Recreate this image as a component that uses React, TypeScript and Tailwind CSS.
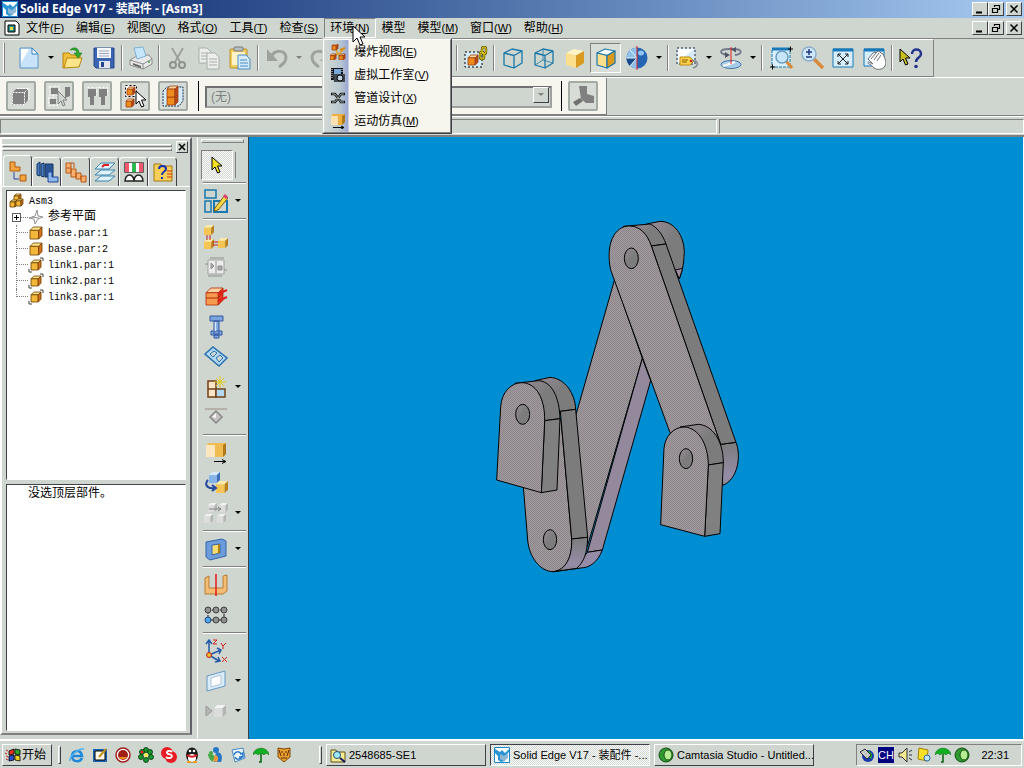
import { useState } from 'react';
import type { ReactNode } from 'react';
import { clsx } from 'clsx';

const raised = 'border border-t-white border-l-white border-r-[#404048] border-b-[#404048] bg-[#cfd6cf]';
const sunken = 'border border-t-[#404048] border-l-[#404048] border-r-white border-b-white';
const etched = 'border border-t-[#808080] border-l-[#808080] border-r-white border-b-white';
const ridge = 'border border-t-white border-l-white border-r-[#808080] border-b-[#808080]';
const dither = 'bg-[repeating-conic-gradient(#ffffff_0_25%,#cfd6cf_0_50%)] bg-size-[2px_2px]';

function Svg({ size = 24, children }: { size?: 12 | 16 | 24; children: ReactNode }) {
  return (
    <svg
      viewBox={`0 0 ${size} ${size}`}
      className={clsx('shrink-0', size === 24 && 'w-6 h-6', size === 16 && 'w-4 h-4', size === 12 && 'w-3 h-3')}
      fill="none"
      aria-hidden="true"
    >
      {children}
    </svg>
  );
}

const tones = {
  gold: ['#fdeaa8', '#f4c552', '#b8801c', 'none'],
  orange: ['#ffd9a0', '#ef8a1c', '#b8481a', '#a04010'],
  tree: ['#ffe48a', '#f3b83a', '#d8701c', '#6a4000'],
  blue: ['#d6e8fb', '#86b4ea', '#3d6eb8', 'none'],
  grey: ['#f2f2f2', '#dcdcdc', '#b4b4b4', 'none'],
  red: ['#ffd0a0', '#f79a50', '#e83818', '#b02808'],
};

function Cube({ x, y, s, tone = 'gold' }: { x: number; y: number; s: number; tone?: keyof typeof tones }) {
  const [top, front, side, line] = tones[tone];
  const d = s * 0.28;
  const w = s - d;
  return (
    <g stroke={line} strokeWidth=".8" strokeLinejoin="round">
      <path d={`M${x} ${y + d}l${d} ${-d}h${w}l${-d} ${d}z`} fill={top} />
      <path d={`M${x} ${y + d}h${w}v${w}h${-w}z`} fill={front} />
      <path d={`M${x + w} ${y + d}l${d} ${-d}v${w}l${-d} ${d}z`} fill={side} />
    </g>
  );
}

function WireCube({ inner = false, line = '#1b78a8' }: { inner?: boolean; line?: string }) {
  return (
    <Svg>
      <g stroke={line} strokeWidth="1.3" strokeLinejoin="round">
        <path d="M3 7l8-4 10 2v12l-8 5-10-3z" />
        <path d="M3 7l10 2.500 8-4.500M13 9.500V22" />
        {inner && <path d="M11 3v11l-8 5M11 14l10 3" strokeWidth=".8" />}
      </g>
    </Svg>
  );
}

function SolidCube({ edges = false }: { edges?: boolean }) {
  return (
    <Svg>
      <g stroke={edges ? '#1b78a8' : 'none'} strokeWidth="1.2" strokeLinejoin="round">
        <path d="M3 7l8-4 10 2-8 4.500z" fill={edges ? '#ffffff' : '#fdf3c4'} />
        <path d="M3 7l10 2.500V22L3 19z" fill="#fbdf8c" />
        <path d="M13 9.500L21 5v12l-8 5z" fill="#d99a20" />
      </g>
    </Svg>
  );
}

function Pointer({ fill = '#fff', x = 0, y = 0 }: { fill?: string; x?: number; y?: number }) {
  return (
    <path
      d={`M${x} ${y}v13l3-3 2.500 6 2.500-1-2.500-6h4.500z`}
      fill={fill}
      stroke="#000"
      strokeWidth="1"
    />
  );
}

const newIcon = (
  <Svg>
    <path d="M3 2h12l6 6v14H3z" fill="#c9e4fa" stroke="#5a94c8" />
    <path d="M4 3h8L4 17z" fill="#fff" />
    <path d="M15 2v6h6z" fill="#fff" stroke="#2f7fc0" />
  </Svg>
);
const openIcon = (
  <Svg>
    <path d="M2 7h6l2 2h9v4H7L3 22H2z" fill="#f0bf3c" stroke="#b8860b" />
    <path d="M3 22l3-10h15l-3 9z" fill="#fde68a" stroke="#b8860b" />
    <path d="M9 4c4-4 9-2 9 3h3l-4 5-4-5h3c0-3-4-4-7-3z" fill="#2fa82f" stroke="#187818" strokeWidth=".6" />
  </Svg>
);
const saveIcon = (
  <Svg>
    <path d="M2 2h20v20H4l-2-2z" fill="#3a63b0" stroke="#25468c" />
    <path d="M5 2h14v10H5z" fill="#f4f6fb" />
    <path d="M7 5h10M7 7.500h10M7 10h10" stroke="#9aa4b8" />
    <path d="M7 15h11v7H7z" fill="#dfe4ee" />
    <path d="M9 16h3v5H9z" fill="#25468c" />
  </Svg>
);
const printIcon = (
  <Svg>
    <path d="M1 14l7-4 12-1 3 4v5l-9 5-13-4z" fill="#e8e8e8" stroke="#8c8c8c" />
    <path d="M5 2l9-1 3 9-9 3z" fill="#c8e6fa" stroke="#6aa6d0" strokeWidth=".8" />
    <path d="M1 14l13 4 9-5M14 18v5" stroke="#8c8c8c" />
    <path d="M4 17l8 3v2l-8-3z" fill="#666" />
    <circle cx="20" cy="16" r="1" fill="#3aa83a" />
  </Svg>
);
const cutIcon = (
  <Svg>
    <path d="M6 2l8 14M17 2L9 16" stroke="#9a9f9a" strokeWidth="1.800" />
    <circle cx="7" cy="19" r="3" stroke="#8d928d" strokeWidth="2" />
    <circle cx="16" cy="19" r="3" stroke="#8d928d" strokeWidth="2" />
  </Svg>
);
const copyIcon = (
  <Svg>
    <g fill="#eceeec" stroke="#a8aea8">
      <path d="M2 2h8l4 4v11H2z" />
      <path d="M4 7h7M4 10h7M4 13h7" />
      <path d="M10 7h8l4 4v12H10z" />
      <path d="M12 13h8M12 16h8M12 19h8" />
    </g>
  </Svg>
);
const pasteIcon = (
  <Svg>
    <rect x="2" y="3" width="17" height="19" rx="1" fill="#f2cc5c" stroke="#b8902c" />
    <path d="M4 6h13v13H4z" fill="#fdf2c8" />
    <rect x="6" y="1" width="9" height="4" rx="1" fill="#b9bdc4" stroke="#777" />
    <path d="M10 9h8l4 4v10H10z" fill="#d5ebfb" stroke="#4a8cc4" />
    <path d="M12 14h7M12 17h8M12 20h8" stroke="#4a8cc4" />
  </Svg>
);
const undoIcon = (
  <Svg>
    <path d="M6 11c4-8 14-7 15 0 0 5-3 7-7 10" stroke="#9da29d" strokeWidth="3" />
    <path d="M2 3v12h11z" fill="#9da29d" />
  </Svg>
);
const redoIcon = (
  <Svg>
    <path d="M18 11C14 3 4 4 3 11c0 5 3 7 7 10" stroke="#9da29d" strokeWidth="3" />
    <path d="M22 3v12H11z" fill="#9da29d" />
  </Svg>
);
const linkPartIcon = (
  <Svg>
    <path d="M1 6h17v15H1z" fill="#d4ecfa" stroke="#000" strokeDasharray="2 2" />
    <Cube x={4} y={9} s={10} tone="orange" />
    <rect x="18" y="1" width="4" height="7" rx="2" stroke="#6a5c00" strokeWidth="2.500" />
    <rect x="16" y="6" width="4" height="7" rx="2" stroke="#6a5c00" strokeWidth="2.500" />
    <rect x="18" y="1" width="4" height="7" rx="2" stroke="#e8d820" />
    <rect x="16" y="6" width="4" height="7" rx="2" stroke="#e8d820" />
  </Svg>
);
const sphereIcon = (
  <Svg>
    <circle cx="12" cy="12" r="10.500" fill="#2465b4" />
    <path d="M12 1.500a10.500 10.500 0 0 0 0 21z" fill="#8fc0ea" />
    <path d="M12 12L5 20a10.500 10.500 0 0 1-3.500-8z" fill="#1a4a8a" />
    <path d="M12 12H1.500M12 12L5 4M12 12L5 20" stroke="#e8f4fc" />
    <ellipse cx="16" cy="7" rx="3" ry="2.500" fill="#8fc4f4" />
    <path d="M12 0v24" stroke="#e02020" />
  </Svg>
);
const tagIcon = (
  <Svg>
    <path d="M2 2h18v16H2z" fill="#d4ecfa" stroke="#202040" strokeDasharray="2 2" />
    <path d="M3 3h16L3 16z" fill="#fff" />
    <path d="M5 11h10l4 4-4 4H5z" fill="#fbd24a" stroke="#c08a10" />
    <path d="M7 14h6M7 16h5" stroke="#8a5c00" />
    <path d="M16 15c8-1 8 5 2 7" stroke="#808890" strokeWidth="1.500" />
    <circle cx="16" cy="15" r="1.200" fill="#d02020" />
  </Svg>
);
const orbitIcon = (
  <Svg>
    <ellipse cx="12" cy="18.500" rx="10" ry="4" fill="#a8cce8" stroke="#4478a8" />
    <path d="M4 20l12-4" stroke="#fff" strokeWidth="2" />
    <path d="M9 9C-1 8 0 3 10 3h4c10 0 10 5 2 6" stroke="#70788a" strokeWidth="1.800" />
    <path d="M6 6l5 3-5 3zM17 1l-5 2.500 5 3z" fill="#505868" />
    <path d="M12 1v17" stroke="#e02020" />
  </Svg>
);
const zoomAreaIcon = (
  <Svg>
    <path d="M3 3h18v18H3z" fill="#d9f0fc" stroke="#1878b8" strokeDasharray="3 1" />
    <path d="M3 3h18" stroke="#1878b8" strokeWidth="3" />
    <path d="M17 15l6 7" stroke="#d88a3a" strokeWidth="3" />
    <circle cx="13" cy="11" r="6" fill="#c8e6fa" stroke="#6a9cc0" strokeWidth="1.500" />
    <path d="M1 21h5M3.500 18.500v5M19 3h5M21.500 .5v5" stroke="#000" />
  </Svg>
);
const zoomIcon = (
  <Svg>
    <path d="M14 13l9 9" stroke="#d88a3a" strokeWidth="3.500" />
    <circle cx="9" cy="8" r="7" fill="#cfe8fb" stroke="#8cb0cc" strokeWidth="1.500" />
    <path d="M9 3v6M6 6h6M6 11h6" stroke="#203a80" strokeWidth="1.500" />
  </Svg>
);
const fitIcon = (
  <Svg>
    <path d="M2 3h20v18H2z" fill="#d6eefb" stroke="#1878b8" />
    <path d="M2 4h20" stroke="#1878b8" strokeWidth="3" />
    <path d="M7 8l10 10M17 8L7 18M7 11V8h3M14 8h3v3M7 15v3h3M17 15v3h-3" stroke="#202020" />
  </Svg>
);
const panIcon = (
  <Svg>
    <path d="M2 3h20v17H2z" fill="#d6eefb" stroke="#1878b8" />
    <path d="M2 4h20" stroke="#1878b8" strokeWidth="3" />
    <path
      d="M6 13l5-6 2-1 1 1 2-2 2 1 1 1 2 1c2 5 4 8 2 12-2 4-8 4-11 2-2-2-3-4-5-4-2-1-1-3 2-1l2 1-3-3z"
      fill="#fff"
      stroke="#707078"
    />
    <path d="M9 13l5-6M12 14l5-7M15 15l4-6" stroke="#707078" />
  </Svg>
);
const helpIcon = (
  <Svg>
    <Pointer fill="#c8c020" x={1} y={3} />
    <path d="M13 8c0-6 9-6 9 0 0 4-5 3-5 8" stroke="#24348c" strokeWidth="2.500" />
    <circle cx="17" cy="20.500" r="1.800" fill="#24348c" />
  </Svg>
);

type Tool = { label: string; icon?: ReactNode; arrow?: boolean; faded?: boolean; pressed?: boolean; sep?: boolean };

const mainTools: Tool[] = [
  { label: '新建', icon: newIcon, arrow: true },
  { label: '打开', icon: openIcon },
  { label: '保存', icon: saveIcon, sep: true },
  { label: '打印', icon: printIcon, sep: true },
  { label: '剪切', icon: cutIcon },
  { label: '复制', icon: copyIcon },
  { label: '粘贴', icon: pasteIcon, sep: true },
  { label: '撤销', icon: undoIcon, arrow: true, faded: true },
  { label: '重做', icon: redoIcon, arrow: true, faded: true, sep: true },
  { label: '激活零件', icon: <WireCube line="#9da29d" /> },
  { label: '显示零件', icon: <WireCube line="#9da29d" />, sep: true },
  { label: '隐藏零件', icon: <WireCube line="#9da29d" />, sep: true },
  { label: '零件链接', icon: linkPartIcon, sep: true },
  { label: '可见边', icon: <WireCube /> },
  { label: '可见和隐藏边', icon: <WireCube inner /> },
  { label: '着色', icon: <SolidCube /> },
  { label: '带边着色', icon: <SolidCube edges />, pressed: true },
  { label: '锐化', icon: sphereIcon, arrow: true, sep: true },
  { label: '命名视图', icon: tagIcon, arrow: true },
  { label: '旋转', icon: orbitIcon, arrow: true, sep: true },
  { label: '区域缩放', icon: zoomAreaIcon },
  { label: '缩放', icon: zoomIcon },
  { label: '适合', icon: fitIcon },
  { label: '平移', icon: panIcon, sep: true },
  { label: '帮助', icon: helpIcon },
];

const selectTools: { label: string; icon: ReactNode }[] = [
  {
    label: '全选',
    icon: (
      <Svg>
        <path d="M3 9l4-4h12v11l-4 5H3z" fill="#808080" />
        <path d="M3.500 8.500h12v12h-12zM8 4.500h12v11M15.500 8.500l4-4" stroke="#fff" strokeDasharray="2 1" />
      </Svg>
    ),
  },
  {
    label: '选择相同',
    icon: (
      <Svg>
        <path d="M4 4h7v6H4zM3 15h6v5H3zM18 3h5v9l-5 2z" fill="#808080" />
        <path d="M2.500 2.500h10v9h-10zM1.500 13.500h9v8h-9z" stroke="#fff" strokeDasharray="2 2" />
        <path d="M11 7v13l3-3 2 5 2-1-2-5h4z" fill="#cfd6cf" stroke="#808080" />
      </Svg>
    ),
  },
  {
    label: '选择小零件',
    icon: (
      <Svg>
        <path d="M3 5h8v7H9v9H5v-8H3zM14 5h8v7h-2v9h-4v-8h-2z" fill="#808080" />
        <path d="M2.500 3.500h9v8M13.500 3.500h9v8" stroke="#fff" strokeDasharray="2 2" />
      </Svg>
    ),
  },
  {
    label: '选择可见',
    icon: (
      <Svg>
        <path d="M2.500 1.500h11v11h-11z" fill="#fff" stroke="#000" strokeDasharray="2 2" />
        <Cube x={4} y={3} s={8} tone="orange" />
        <Cube x={3} y={15} s={8} tone="orange" />
        <Pointer x={13} y={7} />
      </Svg>
    ),
  },
  {
    label: '框选',
    icon: (
      <Svg>
        <path d="M2 7l4-4h16v14l-4 5H2z" fill="#d4ecfa" stroke="#203050" strokeDasharray="2 1" />
        <Cube x={6} y={10} s={11} tone="orange" />
        <Cube x={6} y={2} s={11} tone="orange" />
      </Svg>
    ),
  },
];

type Env = { name: string; key: string; icon: ReactNode };

const environments: Env[] = [
  {
    name: '爆炸视图',
    key: 'E',
    icon: (
      <Svg size={16}>
        <path d="M6 5l2 6M8 11l5-5M3 12l5-2" stroke="#e0a020" strokeWidth="1.500" />
        <Cube x={2} y={0} s={6} tone="orange" />
        <Cube x={0} y={10} s={6} tone="orange" />
        <Cube x={9} y={10} s={6} tone="orange" />
        <path d="M10 6l5-2" stroke="#d88a10" strokeWidth="2" />
      </Svg>
    ),
  },
  {
    name: '虚拟工作室',
    key: 'V',
    icon: (
      <Svg size={16}>
        <path d="M1 1h12v12H1z" fill="#101018" />
        <path d="M2 2v10M12 2v4" stroke="#fff" strokeDasharray="1 1" />
        <path d="M4 2h7v5H4z" fill="#78a8d8" />
        <path d="M3 7h12v8H4z" fill="#404850" />
        <circle cx="10" cy="11" r="3" fill="#c0d0e0" stroke="#000" />
      </Svg>
    ),
  },
  {
    name: '管道设计',
    key: 'X',
    icon: (
      <Svg size={16}>
        <path d="M1 4h4l6 8h4M1 12h4l6-8h4" stroke="#101010" strokeWidth="2.500" />
        <path d="M2 4h3l6 8h3M2 12h3l6-8h3" stroke="#b8c8c0" strokeWidth=".8" />
      </Svg>
    ),
  },
  {
    name: '运动仿真',
    key: 'M',
    icon: (
      <Svg size={16}>
        <path d="M1 3l2-2h12v8l-3 3H1z" fill="#f0b040" />
        <path d="M1 3h7v9H1z" fill="#fbe0b0" />
        <path d="M12 3l3-2v8l-3 3z" fill="#b07818" />
        <path d="M3 14.500h11M11 13l3 1.500-3 1.500" stroke="#000" />
      </Svg>
    ),
  },
];

const menus: [string, string?][] = [
  ['文件', 'F'],
  ['编辑', 'E'],
  ['视图', 'V'],
  ['格式', 'O'],
  ['工具', 'T'],
  ['检查', 'S'],
  ['环境', 'N'],
  ['模型'],
  ['模型', 'M'],
  ['窗口', 'W'],
  ['帮助', 'H'],
];

function AppLogo() {
  return (
    <Svg size={16}>
      <path d="M0 0h16v16H0z" fill="#fff" />
      <path d="M.5 .5h15v15H.5z" stroke="#1c88cc" />
      <path d="M1 2l5 3 2-2 3 3 4-4v3l-4 4v5l-4 1-3-2V9L1 6z" fill="#2a94d4" />
      <path d="M6 7l4 2v5l-4-2zM10 9l4-3v5l-4 3z" fill="#8fb8d4" />
    </Svg>
  );
}

function Accel({ name, k }: { name: string; k?: string }) {
  return (
    <>
      {name}
      {k && (
        <span className="text-[11px]">
          (<u>{k}</u>)
        </span>
      )}
    </>
  );
}

function WindowButtons() {
  const cls = clsx(raised, 'w-4 h-[14px] flex items-center justify-center');
  return (
    <div className="flex pr-0.5">
      <button aria-label="最小化" className={cls}>
        <Svg size={12}><path d="M2 9.500h6" stroke="#000" strokeWidth="2" /></Svg>
      </button>
      <button aria-label="还原" className={cls}>
        <Svg size={12}>
          <path d="M4 2.500h6M4.500 2v2M9.500 2v5M7 6.500h3M2 5.500h6M2.500 5v5M7.500 5v5M2 9.500h6" stroke="#000" strokeWidth="1.200" />
        </Svg>
      </button>
      <button aria-label="关闭" className={clsx(cls, 'ml-0.5')}>
        <Svg size={12}><path d="M2.500 2.500l7 7M9.500 2.500l-7 7" stroke="#000" strokeWidth="1.500" /></Svg>
      </button>
    </div>
  );
}

function Caret({ faded }: { faded?: boolean }) {
  return (
    <svg viewBox="0 0 6 4" className="w-1.5 h-1" aria-hidden="true">
      <path d="M0 0h6L3 3z" fill={faded ? '#808080' : '#000'} />
    </svg>
  );
}

function ToolRow({ tool }: { tool: Tool }) {
  return (
    <>
      <button
        aria-label={tool.label}
        className={clsx('w-[31px] h-[30px] shrink-0 flex items-center justify-center', tool.pressed && [etched, 'bg-[#d8ddd7]'])}
      >
        {tool.icon}
      </button>
      {tool.arrow && (
        <button aria-label={`${tool.label}选项`} className="w-[13px] h-[30px] shrink-0 flex items-center justify-center">
          <Caret faded={tool.faded} />
        </button>
      )}
      {tool.sep && <div className="w-0.5 h-[26px] mx-0.5 shrink-0 bg-[#808080] border-r border-white" />}
    </>
  );
}

function MenuBar() {
  const [open, setOpen] = useState('N');
  return (
    <nav className="h-5 flex items-center text-[12px]">
      <div className="w-5 pl-1">
        <Svg size={16}>
          <path d="M1 1h11l3 3v11H1z" fill="#fff" stroke="#000" />
          <path d="M4 5h7v7H4z" fill="#2a8c8c" stroke="#000" />
          <path d="M6 7h3v3H6z" fill="#f0d840" />
        </Svg>
      </div>
      {menus.map(([name, k]) => {
        const active = open === k;
        return (
          <div key={name + k} className="relative">
            <button
              onClick={() => setOpen(active || !k ? '' : k)}
              className={clsx('h-5 px-[5px] flex items-center border whitespace-nowrap', active ? etched : 'border-transparent')}
            >
              <Accel name={name} k={k} />
            </button>
            {active && k === 'N' && (
              <div className="absolute z-10 -left-0.5 top-full w-[130px] border border-[#cfd6cf] border-r-[#404048] border-b-[#404048]">
                <ul className="px-0.5 bg-[#f6f5ee] border border-t-white border-l-white border-r-[#808080] border-b-[#808080] bg-[linear-gradient(to_right,#d5dad5_0,#b8c8d0_16px,#9ca8d4_24px,#f6f5ee_25px)]">
                  {environments.map((env) => (
                    <li key={env.name}>
                      <button className="w-full h-[23px] flex items-center gap-2 pl-1 text-left">
                        {env.icon}
                        <span className="whitespace-nowrap"><Accel name={env.name} k={env.key} /></span>
                      </button>
                    </li>
                  ))}
                </ul>
              </div>
            )}
            {active && (
              <svg viewBox="0 0 14 22" className="absolute z-20 left-7 top-[7px] w-[14px] h-[22px] pointer-events-none" aria-hidden="true">
                <path d="M1 1v16l4-4 3 7 3-1-3-7h5z" fill="#fff" stroke="#000" />
              </svg>
            )}
          </div>
        );
      })}
      <div className="flex-1" />
      <WindowButtons />
    </nav>
  );
}

function SelectBar() {
  return (
    <div className="w-[607px] h-[37px] shrink-0 flex items-center bg-[#f6f5ee] border-r border-b border-[#808080] pl-1.5">
      <div className="flex gap-2">
        {selectTools.map((t) => (
          <button key={t.label} aria-label={t.label} className="w-[30px] h-[30px] flex items-center justify-center rounded-xs border-2 border-[#a4aaa4] bg-[#d8dcd6]">
            {t.icon}
          </button>
        ))}
      </div>
      <div className="w-px h-[30px] bg-black ml-[10px] mr-1.5" />
      <div className="relative flex-1">
        <select
          aria-label="配置"
          className="appearance-none w-full h-[22px] pl-1 border-2 border-t-[#707070] border-l-[#707070] border-r-[#a0a0a0] border-b-[#a0a0a0] bg-[#cfd6cf] text-[12px] text-[#808080]"
        >
          <option>(无)</option>
        </select>
        <span className={clsx(raised, 'absolute right-[3px] top-[3px] w-4 h-4 flex items-center justify-center pointer-events-none')}>
          <Caret faded />
        </span>
      </div>
      <div className="w-px h-[30px] bg-black ml-[9px] mr-1.5" />
      <button aria-label="应用" className="w-[30px] h-[30px] mr-2 flex items-center justify-center rounded-xs border-2 border-[#a4aaa4] bg-[#d8dcd6]">
        <Svg>
          <path d="M8 2h8v8l7 2v7h-8l-5-4z" fill="#808080" />
          <path d="M2 18l7-4 3 3-7 5z" fill="#707070" />
        </Svg>
      </button>
    </div>
  );
}

const tabs: { label: string; icon: ReactNode }[] = [
  {
    label: '路径查找器',
    icon: (
      <Svg>
        <path d="M4 3h5v5h5v4H4z" fill="#f5a540" stroke="#b05a10" />
        <path d="M8 13v7h5" stroke="#24449c" />
        <path d="M14 16h6v6h-6z" fill="#f5a540" stroke="#b05a10" />
      </Svg>
    ),
  },
  {
    label: '零件库',
    icon: (
      <Svg>
        <path d="M2 4l3-2v14l-3-1zM6 4l3-1v14l-3-1z" fill="#4a7cc0" stroke="#143464" />
        <path d="M10 4h8v13h-8z" fill="#2c5494" stroke="#143464" />
        <path d="M13 12h4v5h6v5H13z" fill="#8cb8ec" stroke="#24449c" />
      </Svg>
    ),
  },
  {
    label: '备选装配',
    icon: (
      <Svg>
        <path d="M2 3h5v10H2zM7 9h5v8H7zM12 13h5v6h-5zM17 16h5v6h-5z" fill="#f7b070" stroke="#b85414" />
        <path d="M7 3h3v5M2 8h5" stroke="#b85414" />
      </Svg>
    ),
  },
  {
    label: '层',
    icon: (
      <Svg>
        <path d="M2 21l6-5h14l-6 5zM2 15l6-5h14l-6 5zM2 9l6-6h14l-6 6z" fill="#e0f2fb" stroke="#3a84b0" />
        <path d="M9 7l2-2h5" stroke="#e02020" strokeWidth="2" />
      </Svg>
    ),
  },
  {
    label: '传感器',
    icon: (
      <Svg>
        <path d="M3 3h18v9H3z" fill="#fff" />
        <path d="M3 3h4v9H3zM17 3h4v9h-4z" fill="#f05870" />
        <path d="M10 3h4v9h-4z" fill="#30b850" />
        <path d="M2.500 2.500h19v10h-19z" stroke="#606060" />
        <path d="M3 21a4.500 6 0 0 1 9 0zM12 21a4.500 6 0 0 1 9 0z" fill="#fff" stroke="#202020" strokeWidth="1.500" />
      </Svg>
    ),
  },
  {
    label: '信息',
    icon: (
      <Svg>
        <path d="M3 4h7l1 2h10v15H3z" fill="#f6cf58" stroke="#a87810" />
        <path d="M16 11h5M16 14h5M16 17h5" stroke="#d03010" />
        <path d="M8 9c0-4 7-4 7 0 0 3-4 2-4 6M11 17v2" stroke="#1830b0" strokeWidth="2" />
      </Svg>
    ),
  },
];

const parts = ['base.par:1', 'base.par:2', 'link1.par:1', 'link2.par:1', 'link3.par:1'];

function TreePanel() {
  return (
    <aside className="w-[192px] mb-1 shrink-0 flex flex-col border-l-2 border-t-2 border-white border-r-2 border-r-[#606068] border-b-2 border-b-[#808080]">
      <div className="h-4 shrink-0 flex items-center gap-1 pr-0.5">
        <div className="flex-1 flex flex-col gap-px">
          <div className={clsx(ridge, 'h-[3px]')} />
          <div className={clsx(ridge, 'h-[3px]')} />
        </div>
        <button aria-label="关闭面板" className={clsx(raised, 'w-3 h-3 flex items-center justify-center')}>
          <Svg size={12}><path d="M3 3l6 6M9 3l-6 6" stroke="#000" strokeWidth="1.500" /></Svg>
        </button>
      </div>
      <div role="tablist" className="flex items-end h-[31px] shrink-0 pl-px">
        {tabs.map((tab, i) => (
          <button
            key={tab.label}
            role="tab"
            aria-label={tab.label}
            aria-selected={i === 0}
            className={clsx(
              'w-[29px] flex items-center justify-center rounded-t-sm border-t border-l border-r border-t-white border-l-white border-r-[#404048]',
              i === 0 ? 'h-[31px]' : 'h-[29px]',
            )}
          >
            {tab.icon}
          </button>
        ))}
      </div>
      <div className="flex-1 min-h-0 flex flex-col gap-1 border-t border-white pt-[3px] px-1 pb-0.5">
        <ul className={clsx(sunken, 'h-[290px] shrink-0 bg-white pt-0.5 pl-0.5 font-["Liberation_Mono","Noto_Sans_CJK_SC",monospace] text-[10px]')}>
          <li className="h-4 flex items-center gap-1">
            <Svg size={16}>
              <Cube x={5} y={1} s={7} tone="tree" />
              <Cube x={1} y={7} s={7} tone="tree" />
              <Cube x={7} y={6} s={7} tone="tree" />
            </Svg>
            Asm3
          </li>
          <li className="h-4 flex items-center pl-[3px] text-[12px]">
            <button aria-label="展开" className="w-[9px] h-[9px] border border-[#606060] flex items-center justify-center">
              <svg viewBox="0 0 7 7" className="w-[7px] h-[7px]"><path d="M1 3.500h5M3.500 1v5" stroke="#000" /></svg>
            </button>
            <span className="w-[7px] border-t border-dotted border-[#808080]" />
            <Svg size={16}>
              <path d="M1 9l6-2 2-6 1 6 5 1-5 2-3 5-1-5z" stroke="#909090" />
              <path d="M4 8l7 1" stroke="#909090" />
            </Svg>
            <span className="pl-1">参考平面</span>
          </li>
          {parts.map((part, i) => (
            <li key={part} className="h-4 flex pl-[7px]">
              <span className={clsx('w-3 border-l border-dotted border-[#808080]', i === parts.length - 1 ? 'h-2' : 'h-4')}>
                <span className="block h-2 border-b border-dotted border-[#808080]" />
              </span>
              <span className="flex items-center gap-1">
                <Svg size={16}>
                  {part.startsWith('link') ? (
                    <>
                      <Cube x={3} y={3} s={10} tone="tree" />
                      <path d="M1 12v3h3M12 1h3v3" stroke="#404040" />
                    </>
                  ) : (
                    <Cube x={2} y={2} s={12} tone="tree" />
                  )}
                </Svg>
                {part}
              </span>
            </li>
          ))}
        </ul>
        <div className={clsx(sunken, 'flex-1 bg-white pl-[21px] text-[12px] leading-4')}>没选顶层部件。</div>
      </div>
    </aside>
  );
}

const sideTools: Tool[] = [
  { label: '草图', arrow: true, sep: true, icon: (
    <Svg>
      <path d="M1 1h11v8H1zM1 12h6v11H1z" stroke="#1878b0" strokeWidth="1.500" />
      <path d="M10 12h13v11H10z" stroke="#1878b0" strokeWidth="2" />
      <path d="M11 19l10-13 3 3-10 12-4 1z" fill="#f8d848" stroke="#806010" />
      <path d="M20 6l3 3" stroke="#e04070" strokeWidth="3" />
    </Svg>
  ) },
  { label: '装配', icon: (
    <Svg>
      <Cube x={0} y={0} s={10} />
      <Cube x={0} y={14} s={10} />
      <Cube x={14} y={13} s={10} />
      <path d="M3 10v5M6 10v5M9 17h5M9 20h5" stroke="#c02020" />
    </Svg>
  ) },
  { label: '捕捉配合', icon: (
    <Svg>
      <path d="M4 5h16v14H4z" fill="#ececec" stroke="#a0a0a0" />
      <path d="M1 9h3M20 15h3M6 3h14M4 21h14M12 6v12M7 8v6l3-3zM14 11h4v4h-4z" stroke="#909090" fill="#a8a8a8" />
    </Svg>
  ) },
  { label: '插入零件', icon: (
    <Svg>
      <Cube x={2} y={3} s={17} tone="red" />
      <path d="M2 13h12l5-5" stroke="#b02808" />
      <path d="M14 9l9-4M14 16l9-4" stroke="#e02020" strokeWidth="2" />
    </Svg>
  ) },
  { label: '紧固件', icon: (
    <Svg>
      <path d="M6 1h13v5H6zM10 6h5v13h-5zM7 16h11v4H7zM10 20h5v3h-5z" fill="#7ca4dc" stroke="#3458a0" />
      <path d="M11.500 7v9" stroke="#d8e8fc" strokeWidth="1.500" />
    </Svg>
  ) },
  { label: '框架', icon: (
    <Svg>
      <path d="M1 9l8-7 14 11-8 8z" fill="#b4d8f4" stroke="#2870b0" strokeWidth="1.500" />
      <path d="M6 9l4-3 3 2-4 4zM12 13l4-3 3 3-4 4z" fill="#cfd6cf" stroke="#2870b0" />
    </Svg>
  ) },
  { label: '阵列', arrow: true, icon: (
    <Svg>
      <path d="M4 6h8v8H4zM4 14h8v8H4z" fill="#fce4c4" stroke="#704018" strokeWidth="1.500" />
      <path d="M12 14h9v8h-9z" fill="#b4d8f4" stroke="#704018" strokeWidth="1.500" />
      <path d="M16 1v12M10 7h12M12 3l8 8M20 3l-8 8" stroke="#e0c818" />
    </Svg>
  ) },
  { label: '镜像', sep: true, icon: (
    <Svg>
      <path d="M1 4h22" stroke="#a08888" />
      <path d="M12 6l6 6-6 6-6-6z" fill="#c4c4c4" stroke="#888888" strokeWidth="1.500" />
      <path d="M12 8l-4 4 4 1z" fill="#f4f4f4" />
    </Svg>
  ) },
  { label: '移动零件', icon: (
    <Svg>
      <path d="M2 4l3-2h17v11l-3 3H2z" fill="#f0bc50" />
      <path d="M2 4h9v12H2z" fill="#fbe6c0" />
      <path d="M19 4l3-2v11l-3 3z" fill="#b07818" />
      <path d="M10 20.500h12M18 18.500l4 2-4 2" stroke="#000" />
    </Svg>
  ) },
  { label: '替换零件', icon: (
    <Svg>
      <Cube x={5} y={1} s={11} tone="blue" />
      <Cube x={12} y={10} s={12} />
      <path d="M4 9c-4 4-1 9 6 8M8 14l4 3-4 3" stroke="#24489c" strokeWidth="2" />
    </Svg>
  ) },
  { label: '传递零件', arrow: true, sep: true, icon: (
    <Svg>
      <Cube x={4} y={2} s={9} tone="grey" />
      <Cube x={15} y={2} s={9} tone="grey" />
      <Cube x={0} y={13} s={9} tone="grey" />
      <Cube x={13} y={13} s={9} tone="grey" />
      <path d="M5 8h12M14 6l3 2-3 2" stroke="#808080" />
    </Svg>
  ) },
  { label: '装配特征', arrow: true, sep: true, icon: (
    <Svg>
      <path d="M2 5l16-3 4 2v15L6 23l-4-3z" fill="#6c9cdc" stroke="#3464a8" />
      <path d="M8 8l8-1v9l-8 2z" fill="#f8dc70" stroke="#3464a8" />
      <path d="M14 7h2v9l-2 1z" fill="#b08018" />
    </Svg>
  ) },
  { label: '剖切', icon: (
    <Svg>
      <path d="M1 5l4-2v12h14V3l4-1v16l-4 3H1z" fill="#f4bc74" stroke="#b87c34" />
      <path d="M12 1v22" stroke="#e81818" strokeWidth="1.500" />
    </Svg>
  ) },
  { label: '爆炸', sep: true, icon: (
    <Svg>
      <path d="M4 7h16v10H4z" stroke="#202020" strokeDasharray="3 1" />
      <g fill="#909090" stroke="#404040">
        <circle cx="4" cy="7" r="3" />
        <circle cx="12" cy="7" r="3" />
        <circle cx="20" cy="7" r="3" />
        <circle cx="12" cy="17" r="3" />
        <circle cx="20" cy="17" r="3" />
      </g>
      <circle cx="4" cy="17" r="3" fill="#50a8f0" stroke="#204880" />
    </Svg>
  ) },
  { label: '坐标系', icon: (
    <Svg>
      <path d="M5 16V2M2 5l3-4 3 4M5 16l12-5M13 9l4 2-2 4M5 16l10 6M14 18l2 4-5 1" stroke="#2458a8" strokeWidth="1.500" />
      <circle cx="5" cy="16" r="2.500" fill="#f0c030" stroke="#c02020" />
      <path d="M9 1h4L9 5h4M17 4l2 3 3-3M19 7v3M18 18l5 5M23 18l-5 5" stroke="#d02020" />
    </Svg>
  ) },
  { label: '参考平面', arrow: true, icon: (
    <Svg>
      <path d="M3 7l18-5v15L3 22z" fill="#d8ecfa" stroke="#6898c4" />
      <path d="M7 9l10-3v9L7 18z" fill="#fff" stroke="#b0c4d4" />
    </Svg>
  ) },
  { label: '显示', arrow: true, icon: (
    <Svg>
      <path d="M2 7v10l6-5z" fill="#b4b4b4" stroke="#989898" />
      <Cube x={10} y={6} s={12} tone="grey" />
    </Svg>
  ) },
];

function SideBar() {
  return (
    <div className="w-[52px] shrink-0 flex flex-col pl-[3px] border-l border-white border-r border-r-[#404048] pt-0.5">
      <div className={clsx(ridge, 'h-1 mr-1 mb-[7px] shrink-0')} />
      <div className="flex items-center h-[30px] shrink-0">
        <button aria-label="选择" className={clsx(etched, dither, 'w-8 h-[30px] flex items-center justify-center')}>
          <Svg><Pointer fill="#f4e020" x={7} y={4} /></Svg>
        </button>
        <span className="w-px h-[26px] bg-[#808080] ml-0.5" />
      </div>
      <div className="h-0.5 my-0.5 mx-0.5 bg-[#808080] border-b border-white shrink-0" />
      {sideTools.map((t) => (
        <div key={t.label} className="shrink-0">
          <div className="flex">
            <button aria-label={t.label} className="w-[30px] h-[30px] flex items-center justify-center">{t.icon}</button>
            {t.arrow && (
              <button aria-label={`${t.label}选项`} className="w-[13px] h-[30px] flex items-center justify-center"><Caret /></button>
            )}
          </div>
          {t.sep && <div className="h-0.5 my-0.5 mx-0.5 bg-[#808080] border-b border-white" />}
        </div>
      ))}
    </div>
  );
}

function Viewport() {
  return (
    <main className="flex-1 min-w-0 bg-[#008ed2] border-r border-white">
      <svg viewBox="249 137 774 602" className="w-full h-full" role="img" aria-label="Asm3">
        <defs>
          <pattern id="face" width="6" height="6" patternUnits="userSpaceOnUse">
            <path d="M0 0h6v6H0z" fill="#a09ca0" />
            <path d="M0 0h3v3H0zM3 3h3v3H3z" fill="#8c8488" />
          </pattern>
          <linearGradient id="cap" x1="0" x2="1" y1="0" y2="1">
            <stop offset="0" stopColor="#988c98" />
            <stop offset=".5" stopColor="#7c7c7c" />
            <stop offset="1" stopColor="#7c7c7c" />
          </linearGradient>
          <linearGradient id="foot" x1="0" x2="0" y1="0" y2="1">
            <stop offset="0" stopColor="#7c7c7c" />
            <stop offset=".8" stopColor="#968ca8" />
            <stop offset="1" stopColor="#8c848c" />
          </linearGradient>
        </defs>
        <g transform="translate(480 210) scale(.33333)" stroke="#000" strokeWidth="3" strokeLinejoin="round">
          <path d="M500 42L540 34C590 34 618 90 612 140C612 165 604 190 598 207L560 130z" fill="url(#cap)" />
          <path d="M586 180L608 175L598 207z" fill="#9c8c9c" />
          <path d="M404 208L487 445L322 1010L230 1000V800L292 600z" fill="url(#face)" />
          <path d="M487 445L512 512L367 1020L322 1027z" fill="#94889c" />
          <path d="M322 1027L367 1020C352 1060 325 1072 310 1073L220 1085L290 1070z" fill="#968ca8" />

          <path d="M722 703L768 697C785 740 772 810 728 826L715 760z" fill="url(#foot)" />
          <path d="M430 49L510 42C532 52 547 72 558 102L514 108L470 80z" fill="url(#cap)" />
          <path d="M514 108L558 102L768 697L722 703z" fill="#7c7c7c" />
          <path d="M570 668L392 180C375 100 405 48 448 48C480 48 502 72 514 108L722 703L700 760z" fill="url(#face)" />
          <ellipse cx="454" cy="145" rx="21" ry="31" fill="url(#cap)" />

          <path d="M130 830L143 990C147 1040 180 1085 220 1085C258 1082 278 1040 275 987L243 630L190 600z" fill="url(#face)" />
          <path d="M165 512L210 502C255 505 285 550 287 598L241 604L200 560z" fill="url(#cap)" />
          <path d="M241 604L287 598L323 982L275 987z" fill="#7c7c7c" />
          <path d="M275 987L323 982C322 1030 312 1055 290 1075L220 1085C258 1080 277 1040 275 987z" fill="url(#foot)" />
          <ellipse cx="210" cy="989" rx="20" ry="30" fill="url(#cap)" />

          <path d="M105 520L175 512C215 514 238 560 240 626L194 632L150 570z" fill="url(#cap)" />
          <path d="M194 632L240 626L231 840L184 848z" fill="#808080" />
          <path d="M50 810L62 590C65 545 95 518 125 518C165 518 195 560 194 632L184 848z" fill="url(#face)" />
          <ellipse cx="128" cy="613" rx="21" ry="30" fill="url(#cap)" />

          <path d="M600 651L655 643C695 645 730 690 730 758L685 765L640 690z" fill="url(#cap)" />
          <path d="M685 765L730 758L720 971L674 979z" fill="#808080" />
          <path d="M542 944L552 715C555 680 580 650 615 651C655 655 684 700 685 765L674 979z" fill="url(#face)" />
          <ellipse cx="618" cy="746" rx="20" ry="30" fill="url(#cap)" />
        </g>
      </svg>
    </main>
  );
}

const umbrella = (
  <Svg size={16}>
    <path d="M0 8c1-9 15-9 16 0-2-2-3-2-5 0-2-2-4-2-6 0-2-2-3-2-5 0z" fill="#10b020" stroke="#087010" strokeWidth=".6" />
    <path d="M8 7v8H6" stroke="#086010" strokeWidth="1.500" />
  </Svg>
);
const camtasia = (
  <Svg size={16}>
    <circle cx="8" cy="8" r="7" fill="#309830" stroke="#145014" />
    <ellipse cx="10" cy="8" rx="4" ry="5" fill="#b8ec90" stroke="#145014" />
  </Svg>
);

const quickLaunch: { label: string; icon: ReactNode }[] = [
  { label: 'Internet Explorer', icon: (
    <Svg size={16}>
      <path d="M13 11c-2 5-10 4-10-2s9-7 10 0H4" stroke="#2088d8" strokeWidth="2.500" />
      <path d="M1 14C0 10 9 1 15 2" stroke="#50b0f0" strokeWidth="1.500" />
    </Svg>
  ) },
  { label: '桌面', icon: (
    <Svg size={16}>
      <path d="M1 2h14v13H1z" fill="#1c64b0" />
      <path d="M3 4h10v9H3z" fill="#fffbe8" stroke="#000" />
      <path d="M7 10l7-8" stroke="#c89020" strokeWidth="2" />
    </Svg>
  ) },
  { label: '录屏', icon: (
    <Svg size={16}>
      <circle cx="8" cy="8" r="7" fill="#fff" stroke="#a02020" strokeWidth="1.500" />
      <circle cx="8" cy="8" r="5" fill="#a02018" />
      <path d="M4 10h8c-1 3-7 3-8 0z" fill="#f09020" />
    </Svg>
  ) },
  { label: 'ICQ', icon: (
    <Svg size={16}>
      <g fill="#189830" stroke="#083008" strokeWidth=".8">
        <circle cx="8" cy="3" r="2.500" /><circle cx="12" cy="5" r="2.500" /><circle cx="13" cy="10" r="2.500" />
        <circle cx="8" cy="13" r="2.500" /><circle cx="3" cy="10" r="2.500" /><circle cx="4" cy="5" r="2.500" />
      </g>
      <circle cx="8" cy="8" r="2" fill="#f0f050" />
      <circle cx="4" cy="5" r="1.500" fill="#e02020" />
    </Svg>
  ) },
  { label: 'Skype', icon: (
    <Svg size={16}>
      <circle cx="6" cy="6" r="6" fill="#e81c24" /><circle cx="10" cy="10" r="6" fill="#e81c24" />
      <path d="M11 5c-2-2-6-1-5 1s5 1 5 3-4 3-6 1" stroke="#fff" strokeWidth="1.800" />
    </Svg>
  ) },
  { label: 'QQ', icon: (
    <Svg size={16}>
      <ellipse cx="8" cy="8" rx="6" ry="7.500" fill="#181818" />
      <ellipse cx="8" cy="11" rx="4" ry="4" fill="#fff" />
      <circle cx="6" cy="4" r="1.300" fill="#fff" /><circle cx="10" cy="4" r="1.300" fill="#fff" />
      <path d="M3 8c3 2 7 2 10 0" stroke="#e02020" strokeWidth="2" />
      <path d="M3 15h4M9 15h4" stroke="#f0a020" strokeWidth="2" />
    </Svg>
  ) },
  { label: 'Messenger', icon: (
    <Svg size={16}>
      <circle cx="9" cy="3" r="3" fill="#2878c8" />
      <path d="M9 5c6 0 7 5 5 10H7z" fill="#2878c8" />
      <circle cx="4" cy="6" r="2" fill="#48a848" />
      <path d="M1 7c3-1 6 1 7 3l-2 5c-2-1-5-4-5-8z" fill="#48a848" />
      <path d="M8 8c3 0 4 4 2 7l-4-1z" fill="#f09838" />
    </Svg>
  ) },
  { label: '同步', icon: (
    <Svg size={16}>
      <path d="M2 3l11-2 2 10-10 4z" fill="#eef6fc" stroke="#4888c0" />
      <path d="M4 8c1-4 6-4 7-1l2-1v4H9M12 9c-1 4-6 4-7 1" stroke="#2878c8" strokeWidth="1.500" />
    </Svg>
  ) },
  { label: '雨伞', icon: umbrella },
  { label: '防护', icon: (
    <Svg size={16}>
      <path d="M2 1l6 1 6-1v9l-6 5-6-5z" fill="#e8a030" stroke="#804808" />
      <path d="M5 5h2M9 5h2M8 6v3M5 11h6M3 3l2 6M13 3l-2 6" stroke="#603008" />
    </Svg>
  ) },
];

const tasks: { title: string; icon: ReactNode; active?: boolean }[] = [
  { title: '2548685-SE1', icon: (
    <Svg size={16}>
      <path d="M1 3h5l1 2h8v10H1z" fill="#f8ec90" stroke="#605010" />
      <circle cx="7" cy="8" r="3.500" fill="#a0e8f8" stroke="#205080" />
      <path d="M10 11l5 4" stroke="#101860" strokeWidth="2" />
    </Svg>
  ) },
  { title: 'Solid Edge V17 - 装配件 -...', icon: <AppLogo />, active: true },
  { title: 'Camtasia Studio - Untitled...', icon: camtasia },
];

function Taskbar() {
  return (
    <footer className="h-[29px] shrink-0 flex items-center gap-1 px-0.5 pt-px border-t-2 border-white text-[11px]">
      <button className={clsx(raised, 'w-[50px] h-[22px] flex items-center gap-px pl-0.5 text-[12px]')}>
        <Svg size={16}>
          <path d="M1 3l2 1M0 6l2 1M1 9l2 1M1 12l2 1" stroke="#d02020" />
          <path d="M4 4l5-2v5l-5 1z" fill="#e83020" stroke="#000" strokeWidth=".8" />
          <path d="M10 2l5 1v5l-5-1z" fill="#30a830" stroke="#000" strokeWidth=".8" />
          <path d="M4 9l5-1v5l-5 1z" fill="#2850d0" stroke="#000" strokeWidth=".8" />
          <path d="M10 8l5 1v5l-5-1z" fill="#f0d020" stroke="#000" strokeWidth=".8" />
        </Svg>
        <span className="whitespace-nowrap">开始</span>
      </button>
      <div className={clsx(raised, 'w-[3px] h-[18px] ml-0.5')} />
      <div className="flex w-[250px]">
        {quickLaunch.map((q) => (
          <button key={q.label} aria-label={q.label} className="w-[23px] h-5 flex items-center justify-center">{q.icon}</button>
        ))}
      </div>
      <div className={clsx(raised, 'w-[3px] h-[18px]')} />
      {tasks.map((t) => (
        <button
          key={t.title}
          className={clsx('w-40 h-[22px] flex items-center gap-[3px] px-[3px]', t.active ? [sunken, dither] : raised)}
        >
          {t.icon}
          <span className="whitespace-nowrap">{t.title}</span>
        </button>
      ))}
      <div className="flex-1" />
      <div className={clsx(etched, 'w-[166px] h-[22px] flex items-center gap-[3px] pl-0.5 pr-3')}>
        <Svg size={16}>
          <circle cx="9" cy="9" r="6" fill="#1838b0" />
          <path d="M9 4c4 1 5 4 3 8L8 9z" fill="#20a030" />
          <path d="M1 5l5-3 6 6-4 4z" fill="#c8c8c8" stroke="#303030" />
        </Svg>
        <span className="w-4 h-4 shrink-0 bg-[#000080] text-white leading-4 text-center">CH</span>
        <Svg size={16}>
          <path d="M2 6h3l5-5v14l-5-5H2z" fill="#f4e890" stroke="#303030" />
          <path d="M12 5l3-2M12 8h3M12 11l3 2" stroke="#303030" />
        </Svg>
        <Svg size={16}>
          <path d="M3 1l9 2-1 11-9-2z" fill="#f8e028" stroke="#a08000" />
          <circle cx="11" cy="11" r="3" fill="#c0e4f8" stroke="#2868a8" />
        </Svg>
        {umbrella}
        {camtasia}
        <time className="ml-auto">22:31</time>
      </div>
    </footer>
  );
}

export default function App() {
  return (
    <div className="h-screen flex flex-col overflow-hidden bg-[#cfd6cf] text-black font-['Liberation_Sans','Noto_Sans_CJK_SC',sans-serif]">
      <header className="h-[18px] shrink-0 flex items-center gap-0.5 pl-0.5 bg-linear-to-r from-[#0a246a] to-[#a6caf0]">
        <AppLogo />
        <h1 className="flex-1 text-white text-[12px] leading-4 font-bold font-['Noto_Sans','Noto_Sans_CJK_SC',sans-serif]">
          Solid Edge V17 - 装配件 - [Asm3]
        </h1>
        <WindowButtons />
      </header>
      <MenuBar />
      <div className="h-[39px] shrink-0 border-t border-[#808080]">
        <div className="w-[934px] h-[38px] flex items-center border-t border-t-white border-r border-r-[#808080] border-b border-b-[#808080] pl-[3px]">
          <div className="w-0.5 h-[30px] mr-2 shrink-0 bg-white border-r border-[#808080]" />
          {mainTools.map((tool) => (
            <ToolRow key={tool.label} tool={tool} />
          ))}
        </div>
      </div>
      <div className="h-[39px] shrink-0 border-t border-white border-b border-b-[#808080]">
        <SelectBar />
      </div>
      <div className="h-[21px] shrink-0 flex gap-0.5 pt-0.5 pb-px border-t border-white border-b-2 border-b-[#808080]">
        <div className={clsx(etched, 'w-[717px]')} />
        <div className={clsx(etched, 'flex-1')} />
      </div>
      <div className="flex-1 min-h-0 flex gap-[5px]">
        <TreePanel />
        <div className="flex-1 min-w-0 flex">
          <SideBar />
          <Viewport />
        </div>
      </div>
      <Taskbar />
    </div>
  );
}
